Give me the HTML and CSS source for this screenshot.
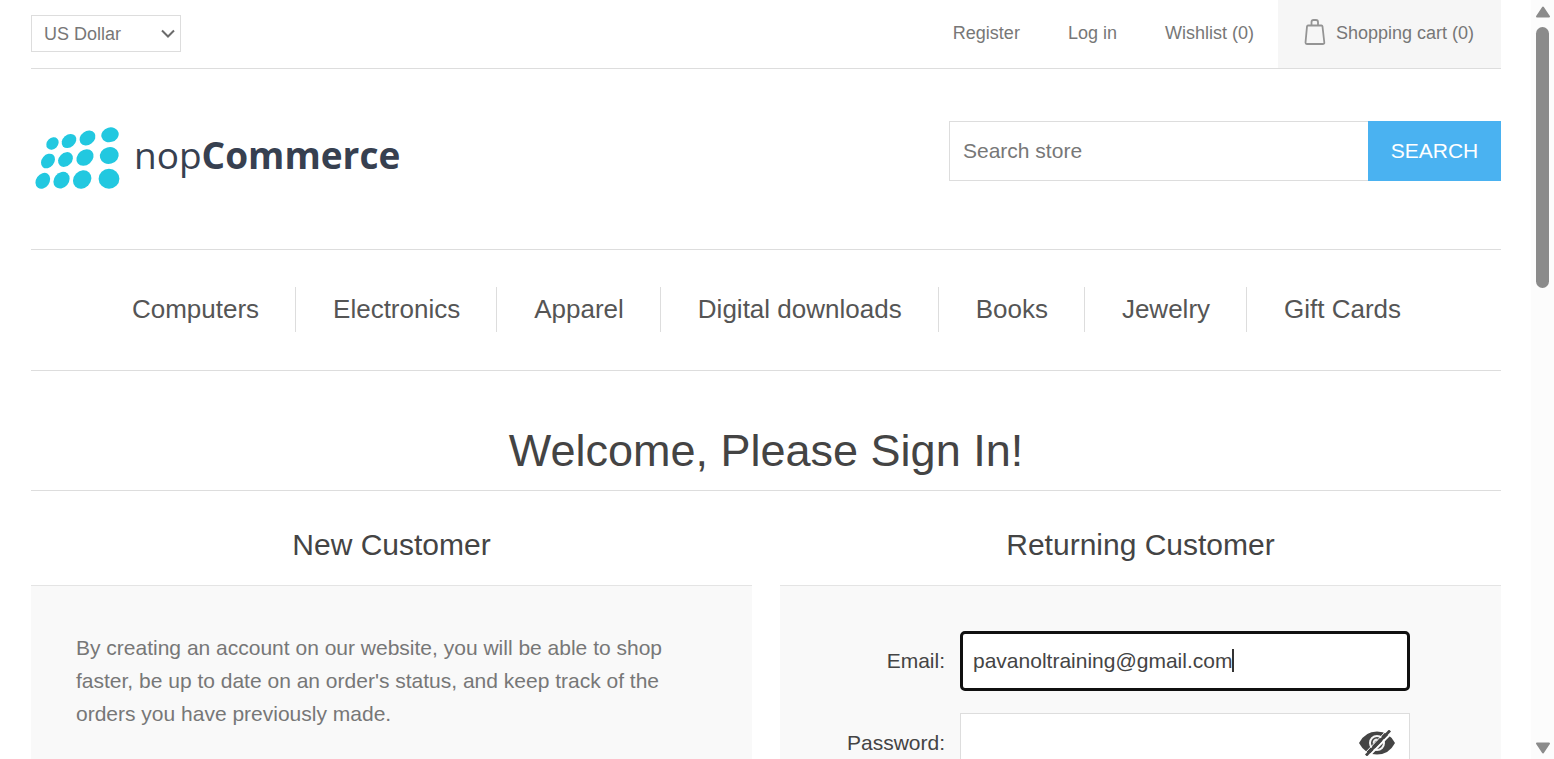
FILE: index.html
```html
<!DOCTYPE html>
<html lang="en">
<head>
<meta charset="utf-8">
<title>nopCommerce - Login</title>
<link rel="stylesheet" href="styles.css">
</head>
<body>
<div class="viewport">
  <div class="page">
    <header>
      <div class="header-upper">
        <div class="currency">
          <select aria-label="Currency selector">
            <option>US Dollar</option>
          </select>
          <svg class="chevron" viewBox="0 0 14 9" fill="none" stroke="#6b6b6b" stroke-width="2"><path d="M1 1.500L7 7.500L13 1.500"/></svg>
        </div>
        <nav class="header-links" aria-label="Account">
          <a href="#">Register</a>
          <a href="#">Log in</a>
          <a href="#">Wishlist (0)</a>
          <a class="cart-link" href="#">
            <svg class="bag" viewBox="0 0 22 26" fill="none" stroke="#949494" stroke-width="1.800" stroke-linejoin="round">
              <path d="M4 6.500Q3.200 6.500 3 7.500L1.500 23.500Q1.500 25 2.800 25H18.700Q20.500 25 20.300 23.500L18.500 7.500Q18.300 6.500 17.500 6.500Z"/>
              <path d="M7.500 6.500V3Q7.500 1 9.500 1H12Q14 1 14 3V6.500"/>
            </svg>
            <span>Shopping cart (0)</span>
          </a>
        </nav>
      </div>
      <div class="header-lower">
        <a class="logo" href="#">
          <svg class="logo-mark" viewBox="0 0 86 64" fill="#22c8e0">
            <ellipse cx="17.500" cy="16.500" rx="6.800" ry="5.500" transform="rotate(-45 17.500 16.500)"/>
            <ellipse cx="34" cy="14" rx="8" ry="6.200" transform="rotate(-40 34 14)"/>
            <ellipse cx="52.500" cy="11" rx="8.500" ry="6.800" transform="rotate(-35 52.500 11)"/>
            <ellipse cx="75" cy="7.800" rx="8.800" ry="7.300" transform="rotate(-15 75 7.800)"/>
            <ellipse cx="13" cy="34" rx="8" ry="6.200" transform="rotate(-50 13 34)"/>
            <ellipse cx="30.500" cy="32.500" rx="8.200" ry="6.500" transform="rotate(-45 30.500 32.500)"/>
            <ellipse cx="50" cy="30.500" rx="9.300" ry="7.500" transform="rotate(-40 50 30.500)"/>
            <ellipse cx="74.300" cy="28.500" rx="9.500" ry="8.300" transform="rotate(-15 74.300 28.500)"/>
            <ellipse cx="7.800" cy="53.800" rx="8.500" ry="6.700" transform="rotate(-55 7.800 53.800)"/>
            <ellipse cx="26.500" cy="53.200" rx="9" ry="7.400" transform="rotate(-50 26.500 53.200)"/>
            <ellipse cx="47.200" cy="52.500" rx="9.800" ry="8.500" transform="rotate(-45 47.200 52.500)"/>
            <ellipse cx="74" cy="51.800" rx="10.400" ry="10"/>
          </svg>
          <span class="logo-text">nop<b>Commerce</b></span>
        </a>
        <form class="search">
          <input type="text" placeholder="Search store" aria-label="Search store">
          <button type="button">SEARCH</button>
        </form>
      </div>
    </header>
    <nav class="menu" aria-label="Catalog">
      <a href="#">Computers</a>
      <a href="#">Electronics</a>
      <a href="#">Apparel</a>
      <a href="#">Digital downloads</a>
      <a href="#">Books</a>
      <a href="#">Jewelry</a>
      <a href="#">Gift Cards</a>
    </nav>
    <main>
      <h1>Welcome, Please Sign In!</h1>
      <div class="columns">
        <section>
          <h2>New Customer</h2>
          <div class="panel">
            <p>By creating an account on our website, you will be able to shop faster, be up to date on an order's status, and keep track of the orders you have previously made.</p>
          </div>
        </section>
        <section>
          <h2>Returning Customer</h2>
          <form class="panel fields">
            <div class="row">
              <label for="email">Email:</label>
              <div class="field">
                <input class="active" id="email" type="email" value="pavanoltraining@gmail.com">
                <span class="caret"></span>
              </div>
            </div>
            <div class="row">
              <label for="password">Password:</label>
              <div class="field">
                <input id="password" type="password">
                <button class="eye" type="button" aria-label="Show password">
                  <svg viewBox="0 0 36 26">
                    <path d="M0 13Q6 1.500 18 1.500T36 13Q30 24.500 18 24.500T0 13Z" fill="#444"/>
                    <circle cx="18" cy="13" r="7" fill="none" stroke="#f4f4f4" stroke-width="2"/>
                    <path d="M14.500 13.500Q14.500 9.500 18.500 9.500" fill="none" stroke="#eee" stroke-width="1.800"/>
                    <path d="M9.500 26.500L33.500 2" stroke="#fff" stroke-width="2"/>
                    <path d="M7 25.500L31 0.500" stroke="#444" stroke-width="2.800"/>
                    <path d="M4.500 24.500L28.500 -0.500" stroke="#fff" stroke-width="1"/>
                  </svg>
                </button>
              </div>
            </div>
          </form>
        </section>
      </div>
    </main>
  </div>
  <div class="scrollbar" aria-hidden="true">
    <svg viewBox="0 0 16 12"><path d="M8 1.500L14 10.500H2Z" fill="#8b8b8b" stroke="#8b8b8b" stroke-width="2" stroke-linejoin="round"/></svg>
    <div class="track"><div class="thumb"></div></div>
    <svg viewBox="0 0 16 12"><path d="M8 10.500L14 1.500H2Z" fill="#8b8b8b" stroke="#8b8b8b" stroke-width="2" stroke-linejoin="round"/></svg>
  </div>
</div>
</body>
</html>
```
FILE: styles.css
```css
* { box-sizing: border-box; }

body {
  margin: 0;
  background: #fff;
  color: #777;
  font-family: "Liberation Sans", Arial, sans-serif;
  font-size: 21px;
}

a { color: inherit; text-decoration: none; }
input, button, select { font: inherit; border-radius: 0; margin: 0; }

.viewport { display: flex; height: 100vh; overflow: hidden; }
.page { flex: 1; min-width: 0; padding: 0 30px 0 31px; overflow: hidden; }

.header-upper {
  display: flex;
  justify-content: space-between;
  height: 69px;
  border-bottom: 1px solid #ddd;
  font-size: 18px;
}
.currency { position: relative; width: 150px; margin-top: 15px; }
.currency select {
  width: 100%;
  height: 37px;
  padding: 0 12px;
  border: 1px solid #ddd;
  background: #fff;
  color: #777;
  appearance: none;
}
.chevron { position: absolute; top: 14px; right: 6px; width: 14px; height: 9px; pointer-events: none; }
.header-links { display: flex; line-height: 66px; }
.header-links a { padding: 0 24px; }
.header-links .cart-link {
  display: flex;
  gap: 10px;
  padding: 0 27px 0 26px;
  background: #f6f6f6;
}
.bag { width: 22px; height: 26px; margin-top: 19px; }

.header-lower {
  display: flex;
  justify-content: space-between;
  align-items: flex-start;
  padding: 52px 0 58px;
  border-bottom: 1px solid #ddd;
}
.logo { display: flex; gap: 13px; padding: 6px 0 0 4px; }
.logo-mark { width: 86px; height: 64px; }
.logo-text {
  color: #374050;
  font-family: "Open Sans", "Noto Sans", sans-serif;
  font-size: 37px;
  line-height: 56px;
}

.search { display: flex; width: 552px; height: 60px; }
.search input {
  flex: 1;
  min-width: 0;
  padding: 0 13px;
  border: 1px solid #ddd;
  border-right: 0;
  color: #777;
}
.search input::placeholder { color: #777; opacity: 1; }
.search button { width: 133px; padding: 0; border: 0; background: #4ab2f1; color: #fff; }

.menu {
  display: flex;
  justify-content: center;
  padding: 37px 0 38px;
  border-bottom: 1px solid #ddd;
  color: #555;
  font-size: 26px;
  line-height: 45px;
}
.menu a { padding: 0 36px 0 37px; }
.menu a + a { border-left: 1px solid #ddd; }

h1, h2 { margin: 0; color: #444; font-weight: 400; text-align: center; }
h1 { padding: 50px 0 9px; border-bottom: 1px solid #ddd; font-size: 45px; line-height: 60px; }
h2 { padding: 34px 0 20px; font-size: 30px; line-height: 40px; }

.columns { display: grid; grid-template-columns: 1fr 1fr; gap: 28px; }
.panel { min-height: 360px; padding: 45px; border-top: 1px solid #e4e4e4; background: #f9f9f9; }
.panel p { margin: 0; line-height: 33px; }

.fields { display: flex; flex-direction: column; gap: 22px; }
.row { display: flex; gap: 15px; }
.row label { width: 120px; color: #444; line-height: 60px; text-align: right; }
.field { position: relative; width: 450px; }
.field input {
  width: 100%;
  height: 60px;
  padding: 0 12px;
  border: 1px solid #ddd;
  background: #fff;
  color: #444;
}
.field .active { border: 3px solid #101010; border-radius: 5px; padding: 0 10px; }
.caret { position: absolute; top: 18px; left: 272px; width: 2px; height: 23px; background: #333; }
.eye { position: absolute; top: 17px; right: 15px; width: 36px; height: 26px; padding: 0; border: 0; background: none; }
.eye svg { display: block; width: 36px; height: 26px; }

.scrollbar {
  display: flex;
  flex-direction: column;
  align-items: center;
  gap: 9px;
  width: 23px;
  padding: 6px 0 5px;
  background: #fcfcfc;
}
.scrollbar svg { width: 16px; height: 12px; }
.track { flex: 1; }
.thumb { width: 13px; height: 37%; border-radius: 7px; background: #8b8b8b; }
```
